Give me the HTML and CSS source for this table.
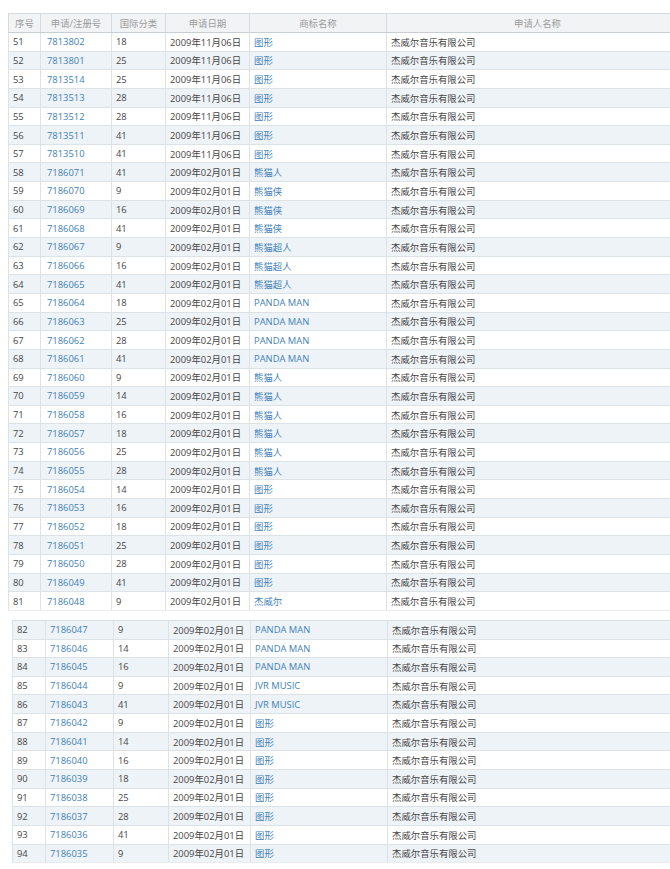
FILE: index.html
```html
<!DOCTYPE html>
<html lang="zh-CN">
<head>
<meta charset="utf-8">
<title>商标列表</title>
<link rel="stylesheet" href="styles.css">
</head>
<body>
<div class="page">
<table class="grid grid-top">
  <colgroup><col class="c1"><col class="c2"><col class="c3"><col class="c4"><col class="c5"><col class="c6"></colgroup>
  <thead>
    <tr><th>序号</th><th>申请/注册号</th><th>国际分类</th><th>申请日期</th><th>商标名称</th><th>申请人名称</th></tr>
  </thead>
  <tbody>
    <tr><td>51</td><td class="lnk">7813802</td><td>18</td><td>2009年11月06日</td><td class="lnk">图形</td><td>杰威尔音乐有限公司</td></tr>
    <tr class="alt"><td>52</td><td class="lnk">7813801</td><td>25</td><td>2009年11月06日</td><td class="lnk">图形</td><td>杰威尔音乐有限公司</td></tr>
    <tr><td>53</td><td class="lnk">7813514</td><td>25</td><td>2009年11月06日</td><td class="lnk">图形</td><td>杰威尔音乐有限公司</td></tr>
    <tr class="alt"><td>54</td><td class="lnk">7813513</td><td>28</td><td>2009年11月06日</td><td class="lnk">图形</td><td>杰威尔音乐有限公司</td></tr>
    <tr><td>55</td><td class="lnk">7813512</td><td>28</td><td>2009年11月06日</td><td class="lnk">图形</td><td>杰威尔音乐有限公司</td></tr>
    <tr class="alt"><td>56</td><td class="lnk">7813511</td><td>41</td><td>2009年11月06日</td><td class="lnk">图形</td><td>杰威尔音乐有限公司</td></tr>
    <tr><td>57</td><td class="lnk">7813510</td><td>41</td><td>2009年11月06日</td><td class="lnk">图形</td><td>杰威尔音乐有限公司</td></tr>
    <tr class="alt"><td>58</td><td class="lnk">7186071</td><td>41</td><td>2009年02月01日</td><td class="lnk">熊猫人</td><td>杰威尔音乐有限公司</td></tr>
    <tr><td>59</td><td class="lnk">7186070</td><td>9</td><td>2009年02月01日</td><td class="lnk">熊猫侠</td><td>杰威尔音乐有限公司</td></tr>
    <tr class="alt"><td>60</td><td class="lnk">7186069</td><td>16</td><td>2009年02月01日</td><td class="lnk">熊猫侠</td><td>杰威尔音乐有限公司</td></tr>
    <tr><td>61</td><td class="lnk">7186068</td><td>41</td><td>2009年02月01日</td><td class="lnk">熊猫侠</td><td>杰威尔音乐有限公司</td></tr>
    <tr class="alt"><td>62</td><td class="lnk">7186067</td><td>9</td><td>2009年02月01日</td><td class="lnk">熊猫超人</td><td>杰威尔音乐有限公司</td></tr>
    <tr><td>63</td><td class="lnk">7186066</td><td>16</td><td>2009年02月01日</td><td class="lnk">熊猫超人</td><td>杰威尔音乐有限公司</td></tr>
    <tr class="alt"><td>64</td><td class="lnk">7186065</td><td>41</td><td>2009年02月01日</td><td class="lnk">熊猫超人</td><td>杰威尔音乐有限公司</td></tr>
    <tr><td>65</td><td class="lnk">7186064</td><td>18</td><td>2009年02月01日</td><td class="lnk">PANDA MAN</td><td>杰威尔音乐有限公司</td></tr>
    <tr class="alt"><td>66</td><td class="lnk">7186063</td><td>25</td><td>2009年02月01日</td><td class="lnk">PANDA MAN</td><td>杰威尔音乐有限公司</td></tr>
    <tr><td>67</td><td class="lnk">7186062</td><td>28</td><td>2009年02月01日</td><td class="lnk">PANDA MAN</td><td>杰威尔音乐有限公司</td></tr>
    <tr class="alt"><td>68</td><td class="lnk">7186061</td><td>41</td><td>2009年02月01日</td><td class="lnk">PANDA MAN</td><td>杰威尔音乐有限公司</td></tr>
    <tr><td>69</td><td class="lnk">7186060</td><td>9</td><td>2009年02月01日</td><td class="lnk">熊猫人</td><td>杰威尔音乐有限公司</td></tr>
    <tr class="alt"><td>70</td><td class="lnk">7186059</td><td>14</td><td>2009年02月01日</td><td class="lnk">熊猫人</td><td>杰威尔音乐有限公司</td></tr>
    <tr><td>71</td><td class="lnk">7186058</td><td>16</td><td>2009年02月01日</td><td class="lnk">熊猫人</td><td>杰威尔音乐有限公司</td></tr>
    <tr class="alt"><td>72</td><td class="lnk">7186057</td><td>18</td><td>2009年02月01日</td><td class="lnk">熊猫人</td><td>杰威尔音乐有限公司</td></tr>
    <tr><td>73</td><td class="lnk">7186056</td><td>25</td><td>2009年02月01日</td><td class="lnk">熊猫人</td><td>杰威尔音乐有限公司</td></tr>
    <tr class="alt"><td>74</td><td class="lnk">7186055</td><td>28</td><td>2009年02月01日</td><td class="lnk">熊猫人</td><td>杰威尔音乐有限公司</td></tr>
    <tr><td>75</td><td class="lnk">7186054</td><td>14</td><td>2009年02月01日</td><td class="lnk">图形</td><td>杰威尔音乐有限公司</td></tr>
    <tr class="alt"><td>76</td><td class="lnk">7186053</td><td>16</td><td>2009年02月01日</td><td class="lnk">图形</td><td>杰威尔音乐有限公司</td></tr>
    <tr><td>77</td><td class="lnk">7186052</td><td>18</td><td>2009年02月01日</td><td class="lnk">图形</td><td>杰威尔音乐有限公司</td></tr>
    <tr class="alt"><td>78</td><td class="lnk">7186051</td><td>25</td><td>2009年02月01日</td><td class="lnk">图形</td><td>杰威尔音乐有限公司</td></tr>
    <tr><td>79</td><td class="lnk">7186050</td><td>28</td><td>2009年02月01日</td><td class="lnk">图形</td><td>杰威尔音乐有限公司</td></tr>
    <tr class="alt"><td>80</td><td class="lnk">7186049</td><td>41</td><td>2009年02月01日</td><td class="lnk">图形</td><td>杰威尔音乐有限公司</td></tr>
    <tr><td>81</td><td class="lnk">7186048</td><td>9</td><td>2009年02月01日</td><td class="lnk">杰威尔</td><td>杰威尔音乐有限公司</td></tr>
  </tbody>
</table>

<table class="grid grid-bottom">
  <colgroup><col class="d1"><col class="d2"><col class="d3"><col class="d4"><col class="d5"><col class="d6"></colgroup>
  <tbody>
    <tr class="alt"><td>82</td><td class="lnk">7186047</td><td>9</td><td>2009年02月01日</td><td class="lnk">PANDA MAN</td><td>杰威尔音乐有限公司</td></tr>
    <tr><td>83</td><td class="lnk">7186046</td><td>14</td><td>2009年02月01日</td><td class="lnk">PANDA MAN</td><td>杰威尔音乐有限公司</td></tr>
    <tr class="alt"><td>84</td><td class="lnk">7186045</td><td>16</td><td>2009年02月01日</td><td class="lnk">PANDA MAN</td><td>杰威尔音乐有限公司</td></tr>
    <tr><td>85</td><td class="lnk">7186044</td><td>9</td><td>2009年02月01日</td><td class="lnk">JVR MUSIC</td><td>杰威尔音乐有限公司</td></tr>
    <tr class="alt"><td>86</td><td class="lnk">7186043</td><td>41</td><td>2009年02月01日</td><td class="lnk">JVR MUSIC</td><td>杰威尔音乐有限公司</td></tr>
    <tr><td>87</td><td class="lnk">7186042</td><td>9</td><td>2009年02月01日</td><td class="lnk">图形</td><td>杰威尔音乐有限公司</td></tr>
    <tr class="alt"><td>88</td><td class="lnk">7186041</td><td>14</td><td>2009年02月01日</td><td class="lnk">图形</td><td>杰威尔音乐有限公司</td></tr>
    <tr><td>89</td><td class="lnk">7186040</td><td>16</td><td>2009年02月01日</td><td class="lnk">图形</td><td>杰威尔音乐有限公司</td></tr>
    <tr class="alt"><td>90</td><td class="lnk">7186039</td><td>18</td><td>2009年02月01日</td><td class="lnk">图形</td><td>杰威尔音乐有限公司</td></tr>
    <tr><td>91</td><td class="lnk">7186038</td><td>25</td><td>2009年02月01日</td><td class="lnk">图形</td><td>杰威尔音乐有限公司</td></tr>
    <tr class="alt"><td>92</td><td class="lnk">7186037</td><td>28</td><td>2009年02月01日</td><td class="lnk">图形</td><td>杰威尔音乐有限公司</td></tr>
    <tr><td>93</td><td class="lnk">7186036</td><td>41</td><td>2009年02月01日</td><td class="lnk">图形</td><td>杰威尔音乐有限公司</td></tr>
    <tr class="alt"><td>94</td><td class="lnk">7186035</td><td>9</td><td>2009年02月01日</td><td class="lnk">图形</td><td>杰威尔音乐有限公司</td></tr>
  </tbody>
</table>
</div>
</body>
</html>
```

FILE: styles.css
```css
html, body {
  margin: 0;
  padding: 0;
  background: #ffffff;
  overflow: hidden;
}

.page {
  padding-top: 13px;
  font-family: "Open Sans", "Noto Sans CJK SC", sans-serif;
  font-size: 9.4px;
  color: #464646;
}

.grid {
  border-collapse: collapse;
  table-layout: fixed;
  width: 680px;
}

.grid-top { margin-left: 8px; }
.grid-bottom { margin-left: 12px; margin-top: 9px; }

.c1 { width: 32px; }
.c2 { width: 71px; }
.c3 { width: 54px; }
.c4 { width: 84px; }
.c5 { width: 137px; }
.c6 { width: 302px; }

.d1 { width: 33px; }
.d2 { width: 68px; }
.d3 { width: 55px; }
.d4 { width: 82px; }
.d5 { width: 137px; }
.d6 { width: 305px; }

.grid th {
  height: 18px;
  padding: 0;
  background: #f1f3f5;
  color: #9c9c9c;
  font-weight: normal;
  text-align: center;
  border: 1px solid #d6dbe0;
  border-bottom-color: #c9ced3;
}

.grid tr { height: 18.65px; }

.grid td {
  padding: 0 4px;
  white-space: nowrap;
  overflow: hidden;
  border: 1px solid #dde2e7;
  border-top-color: #d9dee3;
}

.grid tbody tr:last-child td { border-bottom-color: #e8ecf0; }

.grid td:nth-child(2) { padding-left: 6px; }
.grid-bottom td:nth-child(2) { padding-left: 4px; }

.grid tr.alt td { background: #eef3f8; }

.grid .lnk { color: #4281b8; }
```
